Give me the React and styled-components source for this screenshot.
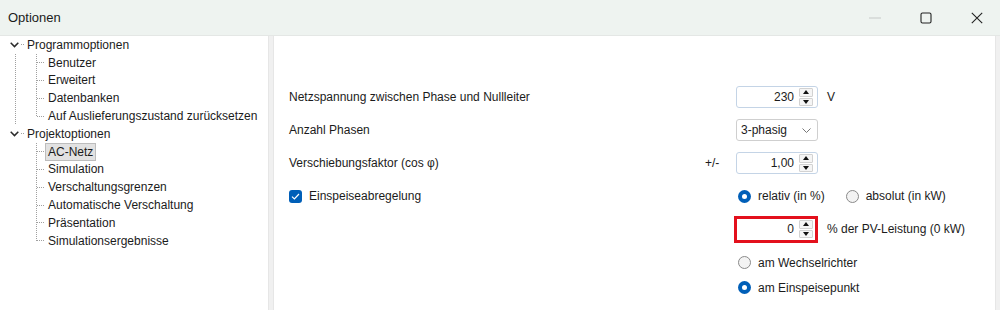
import React from 'react';
import styled, { createGlobalStyle } from 'styled-components';

const Global = createGlobalStyle`
  html, body { margin: 0; padding: 0; background: #fff; }
  body { font-family: "Liberation Sans", Arial, sans-serif; font-size: 12px; color: #1b1b1b; }
  * { box-sizing: border-box; }
`;

const vdots = 'repeating-linear-gradient(to bottom, #a0a0a0 0 1px, transparent 1px 2px)';
const hdots = 'repeating-linear-gradient(to right, #a0a0a0 0 1px, transparent 1px 2px)';

const Window = styled.div`
  width: 1000px;
  height: 310px;
  display: flex;
  flex-direction: column;
  background: #eef3f0;
  overflow: hidden;
`;

const TitleBar = styled.div`
  height: 35px;
  flex: none;
  display: flex;
  align-items: center;
  padding-left: 8px;
`;

const Title = styled.div`
  flex: 1;
  font-size: 13px;
`;

const WinButtons = styled.div`
  display: flex;
  gap: 21px;
  margin-right: 8px;
`;

const WinButton = styled.div`
  width: 30px;
  height: 30px;
  display: flex;
  align-items: center;
  justify-content: center;
  color: ${p => (p.$disabled ? '#c6c9c7' : '#222')};
`;

const Body = styled.div`
  flex: 1;
  display: flex;
  min-height: 0;
  background: #f0f0f0;
  border-top: 1px solid #e4e7e5;
`;

const TreePanel = styled.div`
  width: 268px;
  flex: none;
  background: #fff;
`;

const Splitter = styled.div`
  width: 6px;
  flex: none;
  background: #f0f0f0;
  border-left: 1px solid #e6e6e6;
  border-right: 1px solid #e6e6e6;
`;

const ContentPanel = styled.div`
  width: 721px;
  flex: none;
  background: #fff;
  padding: 44.5px 0 0 15px;
`;

const RightEdge = styled.div`
  flex: 1;
  background: #f0f0f0;
  border-left: 1px solid #e6e6e6;
`;

/* Tree */
const TreeRow = styled.div`
  display: flex;
  align-items: stretch;
  height: 17.8px;
  white-space: nowrap;
`;

const Expander = styled.span`
  width: 21px;
  flex: none;
  display: flex;
  align-items: center;
  justify-content: flex-end;
  padding-right: 2px;
  color: #2a2a2a;
`;

const RootDots = styled.span`
  width: 3px;
  flex: none;
  background-image: ${hdots};
  background-repeat: no-repeat;
  background-size: 3px 1px;
  background-position: 0 50%;
`;

const Indent = styled.span`
  width: 36px;
  flex: none;
  background-image: ${p => (p.$line ? vdots : 'none')};
  background-repeat: no-repeat;
  background-size: 1px 100%;
  background-position: 15px 0;
`;

const Connector = styled.span`
  width: 9px;
  flex: none;
  background-image: ${vdots}, ${hdots};
  background-repeat: no-repeat;
  background-size: 1px ${p => (p.$last ? '50%' : '100%')}, 8px 1px;
  background-position: 0 0, 1px 50%;
`;

const NodeLabel = styled.span`
  display: flex;
  align-items: center;
  padding: 0 ${p => (p.$selected ? '2px' : '3px')};
  background: ${p => (p.$selected ? '#e2e2e2' : 'transparent')};
  border: ${p => (p.$selected ? '1px solid #bdbdbd' : 'none')};
`;

/* Form */
const Form = styled.div`
  display: grid;
  grid-template-columns: 416px 31px 82px 1fr;
  grid-template-rows: 33px 33px 33px 33px 33px 34px 16px;
  align-items: center;
`;

const Label = styled.div`
  grid-column: 1;
  white-space: nowrap;
`;

const Prefix = styled.div`
  grid-column: 2;
`;

const Control = styled.div`
  grid-column: ${p => (p.$wide ? '3 / 5' : '3')};
  display: flex;
  align-items: center;
  gap: ${p => p.$gap || 0}px;
`;

const Suffix = styled.div`
  grid-column: 4;
  padding-left: 9px;
  white-space: nowrap;
`;

const SpinBox = styled.div`
  width: ${p => (p.$error ? '84px' : '82px')};
  height: ${p => (p.$error ? '27px' : '22px')};
  margin-left: ${p => (p.$error ? '-2px' : '0')};
  display: flex;
  align-items: center;
  background: #fff;
  border: ${p => (p.$error ? '3px solid #e3101c' : '1px solid #c4d4e6')};
  border-radius: ${p => (p.$error ? '0' : '3px')};
  padding: ${p => (p.$error ? '0 2px 0 4px' : '1px 4px 1px 4px')};
`;

const SpinValue = styled.span`
  flex: 1;
  text-align: right;
  padding-right: 5px;
`;

const SpinButtons = styled.div`
  width: 14px;
  height: 18px;
  display: flex;
  flex-direction: column;
  gap: 1px;
`;

const SpinBtn = styled.div`
  flex: 1;
  display: flex;
  align-items: center;
  justify-content: center;
  background: #f5f5f5;
  border: 1px solid #d2d2d2;
  border-radius: 1px;
`;

const Combo = styled.div`
  width: 82px;
  height: 22px;
  display: flex;
  align-items: center;
  justify-content: space-between;
  border: 1px solid #cfcfcf;
  border-radius: 3px;
  padding: 0 6px 0 4px;
  background: #fff;
`;

const CheckRow = styled.div`
  grid-column: 1;
  display: flex;
  align-items: center;
  gap: 7px;
`;

const CheckBox = styled.span`
  width: 13px;
  height: 13px;
  flex: none;
  border-radius: 3px;
  background: #005fb8;
  display: flex;
  align-items: center;
  justify-content: center;
`;

const RadioOption = styled.label`
  display: flex;
  align-items: center;
  gap: 7px;
  margin-left: 2px;
  white-space: nowrap;
`;

const RadioCircle = styled.span`
  width: 13px;
  height: 13px;
  flex: none;
  border-radius: 50%;
  display: flex;
  align-items: center;
  justify-content: center;
  background: ${p => (p.$checked ? '#005fb8' : '#f3f3f3')};
  border: ${p => (p.$checked ? 'none' : '1px solid #8a8a8a')};
  &::after {
    content: '';
    display: ${p => (p.$checked ? 'block' : 'none')};
    width: 5px;
    height: 5px;
    border-radius: 50%;
    background: #fff;
  }
`;

const Chevron = () => (
  <svg width="9" height="6" viewBox="0 0 9 6">
    <polyline points="0.7,0.8 4.5,4.6 8.3,0.8" fill="none" stroke="currentColor" strokeWidth="1.5" />
  </svg>
);

const Up = () => (
  <svg width="6" height="4" viewBox="0 0 6 4"><polygon points="0,4 6,4 3,0" fill="#111" /></svg>
);
const Down = () => (
  <svg width="6" height="4" viewBox="0 0 6 4"><polygon points="0,0 6,0 3,4" fill="#111" /></svg>
);

const Spin = ({ value, error }) => (
  <SpinBox $error={error}>
    <SpinValue>{value}</SpinValue>
    <SpinButtons>
      <SpinBtn><Up /></SpinBtn>
      <SpinBtn><Down /></SpinBtn>
    </SpinButtons>
  </SpinBox>
);

const Radio = ({ checked, children }) => (
  <RadioOption>
    <RadioCircle $checked={checked} />
    {children}
  </RadioOption>
);

const tree = [
  { label: 'Programmoptionen', children: ['Benutzer', 'Erweitert', 'Datenbanken', 'Auf Auslieferungszustand zurücksetzen'] },
  { label: 'Projektoptionen', children: ['AC-Netz', 'Simulation', 'Verschaltungsgrenzen', 'Automatische Verschaltung', 'Präsentation', 'Simulationsergebnisse'] },
];

export default function App() {
  return (
    <>
      <Global />
      <Window>
        <TitleBar>
          <Title>Optionen</Title>
          <WinButtons>
            <WinButton $disabled>
              <svg width="12" height="2" viewBox="0 0 12 2"><rect x="0" y="0.5" width="12" height="1" fill="currentColor" /></svg>
            </WinButton>
            <WinButton>
              <svg width="12" height="12" viewBox="0 0 12 12"><rect x="1" y="1" width="10" height="10" rx="1.5" fill="none" stroke="currentColor" strokeWidth="1.1" /></svg>
            </WinButton>
            <WinButton>
              <svg width="12" height="12" viewBox="0 0 12 12"><path d="M0.8 0.8 L11.2 11.2 M11.2 0.8 L0.8 11.2" stroke="currentColor" strokeWidth="1.1" /></svg>
            </WinButton>
          </WinButtons>
        </TitleBar>
        <Body>
          <TreePanel>
            {tree.map((root, ri) => (
              <React.Fragment key={root.label}>
                <TreeRow>
                  <Expander><Chevron /></Expander>
                  <RootDots />
                  <NodeLabel>{root.label}</NodeLabel>
                </TreeRow>
                {root.children.map((c, ci) => (
                  <TreeRow key={c}>
                    <Indent $line={ri < tree.length - 1} />
                    <Connector $last={ci === root.children.length - 1} />
                    <NodeLabel $selected={c === 'AC-Netz'}>{c}</NodeLabel>
                  </TreeRow>
                ))}
              </React.Fragment>
            ))}
          </TreePanel>
          <Splitter />
          <ContentPanel>
            <Form>
              <Label>Netzspannung zwischen Phase und Nullleiter</Label>
              <Control><Spin value="230" /></Control>
              <Suffix>V</Suffix>

              <Label>Anzahl Phasen</Label>
              <Control>
                <Combo>
                  <span>3-phasig</span>
                  <svg width="9" height="5" viewBox="0 0 9 5"><polyline points="0.5,0.5 4.5,4.5 8.5,0.5" fill="none" stroke="#777" strokeWidth="1" /></svg>
                </Combo>
              </Control>

              <Label>Verschiebungsfaktor (cos φ)</Label>
              <Prefix>+/-</Prefix>
              <Control><Spin value="1,00" /></Control>

              <CheckRow>
                <CheckBox>
                  <svg width="9" height="7" viewBox="0 0 9 7"><polyline points="1,3.6 3.4,6 8,1" fill="none" stroke="#fff" strokeWidth="1.2" /></svg>
                </CheckBox>
                Einspeiseabregelung
              </CheckRow>
              <Control $wide $gap={19}>
                <Radio checked>relativ (in %)</Radio>
                <Radio>absolut (in kW)</Radio>
              </Control>

              <Control><Spin value="0" error /></Control>
              <Suffix>% der PV-Leistung (0 kW)</Suffix>

              <Control $wide><Radio>am Wechselrichter</Radio></Control>
              <Control $wide><Radio checked>am Einspeisepunkt</Radio></Control>
            </Form>
          </ContentPanel>
          <RightEdge />
        </Body>
      </Window>
    </>
  );
}
